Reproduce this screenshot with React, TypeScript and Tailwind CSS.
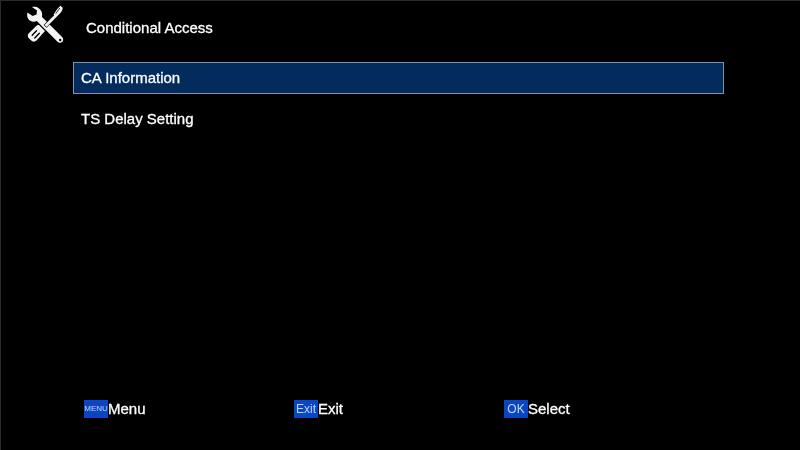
export default function App() {
  const footer = [
    { key: "MENU", label: "Menu", keyClass: "text-[8px]" },
    { key: "Exit", label: "Exit", keyClass: "text-[12px]" },
    { key: "OK", label: "Select", keyClass: "text-[12px]" },
  ];
  return (
    <div className="w-[800px] h-[450px] bg-black overflow-hidden flex flex-col border-t border-l border-[#2a2a2a] text-white blur-[0.35px] font-['Liberation_Sans',Arial,sans-serif]">
      <header className="h-[61px] flex items-start pl-[24px] pt-[4px]">
        <svg width="40" height="40" viewBox="0 0 40 40" className="shrink-0">
          <path fill="#f4f4f4" d="M7 2 L12 5.5 L11.5 9.5 L7.5 11 L2.5 7.5 C1.5 11 2.6 14.5 5.6 16 C7.8 17 10 16.8 11.8 16 L32.5 36.8 C33.8 38.1 36.2 38.1 37.4 36.8 C38.6 35.5 38.4 33.4 37.1 32.1 L17 12 C17.8 8.5 16.5 5 13.8 3.2 C11.8 1.8 9.2 1.4 7 2 Z" />
          <circle cx="35.2" cy="35" r="1.2" fill="#000" />
          <g stroke="#000" strokeWidth="1.2" paintOrder="stroke">
            <path fill="#f4f4f4" d="M35.5 0.8 L37.8 3 L37 5.5 C36 7.5 34.5 9.2 32.7 10.8 L31.2 12.2 L21.5 22 L19.5 20 L29.2 10.2 L28.6 9.5 L30 7.5 C31.5 5 33.3 2.6 35.5 0.8 Z" />
            <path fill="#f4f4f4" d="M14.5 20.5 L20 26 L11.5 35.5 C10 37 7.6 37 6.2 35.6 L3.8 33.2 C2.4 31.8 2.4 29.6 3.8 28.2 L11.2 21 C12.2 20 13.5 19.8 14.5 20.5 Z" />
          </g>
          <path d="M34.8 3 L30.8 8.6" stroke="#000" strokeWidth="0.8" />
          <g stroke="#000" strokeWidth="1.4" strokeLinecap="round">
            <path d="M11.5 25.8 L7.2 30.2" />
            <path d="M14.3 28.3 L9.8 33" />
          </g>
        </svg>
        <h1 className="ml-[21px] mt-[13px] text-[15px] leading-[20px] font-normal [-webkit-text-stroke:0.3px_white]">Conditional Access</h1>
      </header>
      <ul className="ml-[72px] w-[651px] text-[15px] [-webkit-text-stroke:0.3px_white]">
        <li className="h-[32px] flex items-center px-[7px] bg-[#032c5c] border border-[#7d93ab]">CA Information</li>
        <li className="h-[32px] mt-[9px] flex items-center px-[8px]">TS Delay Setting</li>
      </ul>
      <footer className="mt-auto mb-[32px] ml-[83px] grid grid-cols-[210px_210px_210px]">
        {footer.map((f) => (
          <div key={f.label} className="flex items-center">
            <span className={`w-[24px] h-[18px] flex items-center justify-center bg-[#0a46c4] text-[#c3d5f8] ${f.keyClass}`}>{f.key}</span>
            <span className="text-[15px] leading-[18px] [-webkit-text-stroke:0.3px_white]">{f.label}</span>
          </div>
        ))}
      </footer>
    </div>
  );
}
